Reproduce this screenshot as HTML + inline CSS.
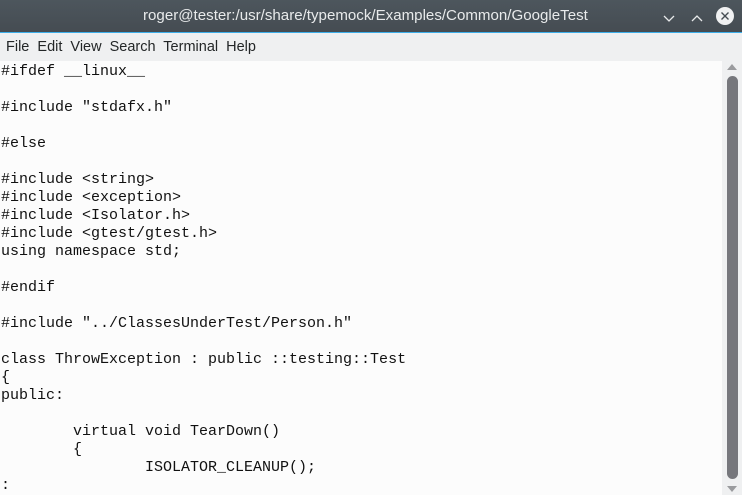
<!DOCTYPE html><html><head><style>
body{margin:0;width:742px;height:495px;overflow:hidden;background:#eff0f1;font-family:"Liberation Sans",sans-serif;position:relative}
.t{position:absolute;left:0;top:0;width:742px;height:32px;background:linear-gradient(#4d565d,#454c52);color:#e8eaeb;font-size:15.1px;line-height:32px}
.t span{position:absolute;left:143px}
.bl{position:absolute;top:32px;left:0;width:742px;height:1px;background:#3daee9}
.m{position:absolute;top:39px;left:6px;font-size:14.5px;color:#232627;word-spacing:4px}
.c{position:absolute;left:0;top:61px;width:722px;height:434px;background:#fcfcfc}
pre{margin:0;font-family:"Liberation Mono",monospace;font-size:15px;line-height:18px;color:#111;position:absolute;left:1px;top:2px}
.th{position:absolute;left:727px;top:76px;width:11px;height:403px;background:#76777c;border-radius:6px}
</style></head><body>
<div class="t"><span>roger@tester:/usr/share/typemock/Examples/Common/GoogleTest</span>
<svg style="position:absolute;left:660px;top:10px" width="50" height="20"><path d="M4 6l5 5 5-5" stroke="#e8eaeb" stroke-width="1.3" fill="none"/><path d="M32 11l5-5 5 5" stroke="#e8eaeb" stroke-width="1.3" fill="none"/></svg>
<svg style="position:absolute;left:715px;top:6px" width="20" height="20"><circle cx="10" cy="10" r="9" fill="#f0f1f2"/><path d="M6.5 6.5l7 7M13.5 6.5l-7 7" stroke="#454c52" stroke-width="1.4"/></svg></div>
<div class="bl"></div>
<div class="m">File Edit View Search Terminal Help</div>
<div class="c"><pre>#ifdef __linux__

#include "stdafx.h"

#else

#include &lt;string&gt;
#include &lt;exception&gt;
#include &lt;Isolator.h&gt;
#include &lt;gtest/gtest.h&gt;
using namespace std;

#endif

#include "../ClassesUnderTest/Person.h"

class ThrowException : public ::testing::Test
{
public:

        virtual void TearDown()
        {
                ISOLATOR_CLEANUP();
:</pre></div>
<svg style="position:absolute;left:725px;top:62px" width="14" height="10"><path d="M2 8l5-6 5 6z" fill="#9a9b9e"/></svg>
<div class="th"></div>
<svg style="position:absolute;left:725px;top:484px" width="14" height="10"><path d="M2 2l5 6 5-6z" fill="#9a9b9e"/></svg>
</body></html>
